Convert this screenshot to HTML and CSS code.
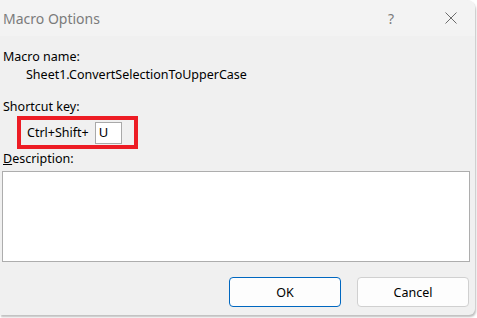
FILE: index.html
```html
<!DOCTYPE html>
<html lang="en">
<head>
    <meta charset="UTF-8">
    <meta name="viewport" content="width=device-width, initial-scale=1.0">
    <title>Macro Options</title>
    <link rel="stylesheet" href="styles.css">
</head>
<body>
    <div class="dialog">
        <!-- Title Bar -->
        <div class="titlebar">
            <span class="title">Macro Options</span>
            <span class="help">?</span>
            <span class="close">
                <svg width="12" height="12" viewBox="0 0 12 12">
                    <path d="M0.5 0.5 L11.5 11.5 M11.5 0.5 L0.5 11.5" stroke="#6b6b6b" stroke-width="1" fill="none"/>
                </svg>
            </span>
        </div>

        <div class="content">
            <div class="label label-first">Macro name:</div>
            <div class="macro-name">Sheet1.ConvertSelectionToUpperCase</div>

            <div class="label label-shortcut">Shortcut key:</div>
            <div class="shortcut">
                <span>Ctrl+Shift+</span>
                <div class="key">U</div>
            </div>

            <div class="label label-desc"><u>D</u>escription:</div>
            <div class="description"></div>

            <!-- Buttons -->
            <div class="buttons">
                <button class="btn btn-default">OK</button>
                <button class="btn">Cancel</button>
            </div>
        </div>
    </div>
</body>
</html>
```
FILE: styles.css
```css
/* Basic Reset */
* {
    margin: 0;
    padding: 0;
    box-sizing: border-box;
}

body {
    font-family: "Segoe UI", "Noto Sans", sans-serif;
    font-size: 12.5px;
    color: #000;
    background-color: #ffffff;
    width: 477px;
    height: 318px;
    overflow: hidden;
}

.dialog {
    width: 475px;
    height: 315px;
    background-color: #f0f0f0;
    border-top-right-radius: 8px;
    border-bottom-right-radius: 6px;
    box-shadow: 1px 2px 2px rgba(0, 0, 0, 0.25);
    overflow: hidden;
}

/* Title Bar */
.titlebar {
    height: 36px;
    background-color: #f3f3f3;
    display: flex;
    align-items: center;
    padding-left: 3px;
    color: #7b7b7b;
    font-size: 14px;
}

.title {
    flex: 1;
    margin-top: 1px;
}

.help {
    width: 72px;
    text-align: center;
    font-size: 14px;
}

.close {
    width: 48px;
    display: flex;
    justify-content: center;
}

/* Content */
.content {
    padding: 0 3px;
}

.label {
    line-height: 16px;
}

.label-first {
    margin-top: 13px;
}

.macro-name {
    line-height: 16px;
    margin-top: 2px;
    padding-left: 23px;
}

.label-shortcut {
    margin-top: 16px;
}

.shortcut {
    width: 121px;
    height: 33px;
    margin-top: 1px;
    margin-left: 14px;
    border: 4px solid #ed1c24;
    display: flex;
    align-items: center;
    padding-left: 6px;
}

.shortcut span {
    margin-right: 6px;
}

.key {
    width: 27px;
    height: 22px;
    background-color: #fff;
    border: 1px solid #a9a9a9;
    padding-left: 3px;
    line-height: 19px;
    font-size: 13px;
}

.label-desc {
    margin-top: 2px;
}

.label-desc u {
    text-underline-offset: 1px;
}

.description {
    width: 468px;
    height: 91px;
    margin-top: 4px;
    margin-left: -1px;
    background-color: #fff;
    border: 1px solid #adadad;
}

/* Buttons */
.buttons {
    display: flex;
    justify-content: flex-end;
    gap: 16px;
    margin-top: 15px;
    padding-right: 3px;
}

.btn {
    width: 112px;
    height: 30px;
    font-family: inherit;
    font-size: 12.5px;
    background-color: #fdfdfd;
    border: 1px solid #d0d0d0;
    border-radius: 4px;
    color: #000;
}

.btn-default {
    border-color: #0067c0;
}
```
